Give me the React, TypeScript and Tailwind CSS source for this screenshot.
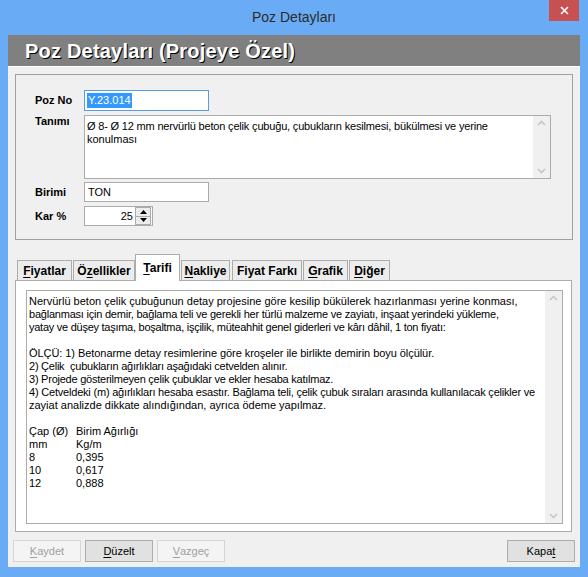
import React from "react";

const UI = { fontFamily: '"Liberation Sans", Arial, sans-serif' };

// satır, harf aralığı (Tahoma genişliğine yaklaştırmak için)
const memoLines: [string, string][] = [
  ["Nervürlü beton çelik çubuğunun detay projesine göre kesilip bükülerek hazırlanması yerine konması,", "tracking-[0px]"],
  ["bağlanması için demir, bağlama teli ve gerekli her türlü malzeme ve zayiatı, inşaat yerindeki yükleme,", "tracking-[-0.22px]"],
  ["yatay ve düşey taşıma, boşaltma, işçilik, müteahhit genel giderleri ve kârı dâhil, 1 ton fiyatı:", "tracking-[-0.26px]"],
  ["", ""],
  ["ÖLÇÜ: 1) Betonarme detay resimlerine göre kroşeler ile birlikte demirin boyu ölçülür.", "tracking-[-0.06px]"],
  ["2) Çelik  çubukların ağırlıkları aşağıdaki cetvelden alınır.", "tracking-[-0.24px]"],
  ["3) Projede gösterilmeyen çelik çubuklar ve ekler hesaba katılmaz.", "tracking-[-0.24px]"],
  ["4) Cetveldeki (m) ağırlıkları hesaba esastır. Bağlama teli, çelik çubuk sıraları arasında kullanılacak çelikler ve", "tracking-[-0.2px]"],
  ["zayiat analizde dikkate alındığından, ayrıca ödeme yapılmaz.", "tracking-[0px]"],
  ["", ""],
];

const tablo = [
  ["Çap (Ø)", "Birim Ağırlığı"],
  ["mm", "Kg/m"],
  ["8", "0,395"],
  ["10", "0,617"],
  ["12", "0,888"],
];

const sekmeler = [
  { ad: "Fiyatlar", alt: 0, w: "w-[55px]", ml: "ml-[2px]" },
  { ad: "Özellikler", alt: 1, w: "w-[62px]", ml: "ml-[1px]" },
  { ad: "Tarifi", alt: 0, w: "w-[45px]", ml: "ml-0", aktif: true },
  { ad: "Nakliye", alt: 0, w: "w-[49px]", ml: "ml-[1px]" },
  { ad: "Fiyat Farkı", alt: -1, w: "w-[70px]", ml: "ml-[2px]" },
  { ad: "Grafik", alt: 0, w: "w-[45px]", ml: "ml-[1px]" },
  { ad: "Diğer", alt: 0, w: "w-[41px]", ml: "ml-[1px]" },
];

function Kisayol({ metin, alt }: { metin: string; alt: number }) {
  if (alt < 0) return <>{metin}</>;
  return (
    <>
      {metin.slice(0, alt)}
      <span className="underline underline-offset-2">{metin[alt]}</span>
      {metin.slice(alt + 1)}
    </>
  );
}

function ScrollBar() {
  return (
    <div className="w-[17px] bg-[#f0f0f0] flex flex-col justify-between items-center py-[4px]">
      <svg width="9" height="6" viewBox="0 0 9 6">
        <path d="M1 5 L4.5 1.5 L8 5" stroke="#c2c2c2" strokeWidth="1.4" fill="none" />
      </svg>
      <svg width="9" height="6" viewBox="0 0 9 6">
        <path d="M1 1 L4.5 4.5 L8 1" stroke="#c2c2c2" strokeWidth="1.4" fill="none" />
      </svg>
    </div>
  );
}

function Dugme({ metin, alt, pasif }: { metin: string; alt: number; pasif?: boolean }) {
  return (
    <button
      className={`w-[68px] h-[22px] border text-[11px] flex items-center justify-center ${
        pasif ? "bg-[#f4f4f4] border-[#d5d5d5] text-[#a0a0a0]" : "bg-[#e1e1e1] border-[#adadad] text-black"
      }`}
      style={UI}
    >
      <Kisayol metin={metin} alt={alt} />
    </button>
  );
}

export default function App() {
  return (
    <div className="w-[588px] h-[577px] bg-[#6aabf5] flex flex-col overflow-hidden" style={UI}>
      {/* Başlık çubuğu */}
      <div className="h-[35px] relative shrink-0">
        <div className="h-[34px] flex items-center justify-center text-[14px] text-[#2b2b2b]">Poz Detayları</div>
        <div className="absolute right-[9px] top-0 w-[30px] h-[21px] bg-[#c75050] flex items-center justify-center">
          <svg width="9" height="9" viewBox="0 0 9 9">
            <path d="M1 1 L8 8 M8 1 L1 8" stroke="#fff" strokeWidth="1.6" />
          </svg>
        </div>
      </div>

      <div className="mx-[8px] flex-1 flex flex-col bg-[#f0f0f0]">
        {/* Başlık bandı */}
        <div className="h-[32px] bg-[#808080] border-b border-white flex items-center pl-[17px] shrink-0">
          <span className="text-[20px] font-bold text-white tracking-[0.2px] [text-shadow:1px_1px_0_#000]">Poz Detayları (Projeye Özel)</span>
        </div>

        {/* Genel bilgiler */}
        <div className="mx-[7px] mt-[7px] h-[166px] border border-[#a0a0a0] pt-[15px] pl-[19px] flex flex-col text-[11px]">
          <div className="flex items-center h-[21px]">
            <span className="w-[49px] font-bold">Poz No</span>
            <div className="w-[125px] h-[21px] border border-[#569de5] bg-white flex items-center pl-[2px]">
              <span className="bg-[#3399ff] text-white px-[1px] leading-[15px]">Y.23.014</span>
            </div>
          </div>
          <div className="flex mt-[4px] h-[64px]">
            <span className="w-[49px] font-bold leading-[13px]">Tanımı</span>
            <div className="w-[467px] h-[64px] border border-[#ababab] bg-white flex">
              <div className="flex-1 pl-[2px] pt-[4px] leading-[12.5px]">
                <span className="tracking-[-0.18px]">Ø 8- Ø 12 mm nervürlü beton çelik çubuğu, çubukların kesilmesi, bükülmesi ve yerine</span>
                <br />
                konulması
              </div>
              <ScrollBar />
            </div>
          </div>
          <div className="flex items-center mt-[3px] h-[20px]">
            <span className="w-[49px] font-bold">Birimi</span>
            <div className="w-[125px] h-[20px] border border-[#ababab] bg-white flex items-center pl-[3px]">TON</div>
          </div>
          <div className="flex items-center mt-[4px] h-[20px]">
            <span className="w-[49px] font-bold">Kar %</span>
            <div className="w-[69px] h-[20px] border border-[#ababab] bg-white flex items-center">
              <span className="flex-1 text-right pr-[2px]">25</span>
              <div className="w-[16px] h-[18px] flex flex-col mr-[1px]">
                <div className="flex-1 border border-[#acacac] bg-[#ececec] flex items-center justify-center">
                  <svg width="7" height="4" viewBox="0 0 7 4"><path d="M0 4 L3.5 0 L7 4Z" fill="#000" /></svg>
                </div>
                <div className="flex-1 border border-t-0 border-[#acacac] bg-[#ececec] flex items-center justify-center">
                  <svg width="7" height="4" viewBox="0 0 7 4"><path d="M0 0 L3.5 4 L7 0Z" fill="#000" /></svg>
                </div>
              </div>
            </div>
          </div>
        </div>

        {/* Sekmeler */}
        <div className="mx-[7px] mt-[14px] flex flex-col text-[12px]">
          <div className="flex items-end h-[26px] relative z-10">
            {sekmeler.map((s) =>
              s.aktif ? (
                <div
                  key={s.ad}
                  className={`${s.w} ${s.ml} h-[27px] -mb-[1px] border border-b-0 border-[#acacac] bg-white pt-[4px] text-center font-bold`}
                >
                  <Kisayol metin={s.ad} alt={s.alt} />
                </div>
              ) : (
                <div
                  key={s.ad}
                  className={`${s.w} ${s.ml} h-[20px] border border-b-0 border-[#acacac] bg-[#ececec] flex items-center justify-center font-bold`}
                >
                  <Kisayol metin={s.ad} alt={s.alt} />
                </div>
              )
            )}
          </div>
          <div className="w-[557px] h-[252px] border border-[#acacac] bg-white pl-[10px] pt-[9px] text-[11px]">
            <div className="w-[537px] h-[234px] border border-[#ababab] flex">
              <div className="flex-1 pl-[2px] pt-[4px] leading-[13px] whitespace-pre">
                {memoLines.map(([l, t], i) => (
                  <div key={i} className={`h-[13px] ${t}`}>{l}</div>
                ))}
                {tablo.map((r, i) => (
                  <div key={"t" + i} className="h-[13px] flex">
                    <span className="w-[47px]">{r[0]}</span>
                    <span>{r[1]}</span>
                  </div>
                ))}
              </div>
              <ScrollBar />
            </div>
          </div>
        </div>

        {/* Butonlar */}
        <div className="mt-[8px] mx-[5px] flex gap-[4px]">
          <Dugme metin="Kaydet" alt={0} pasif />
          <Dugme metin="Düzelt" alt={0} />
          <Dugme metin="Vazgeç" alt={0} pasif />
          <div className="flex-1" />
          <Dugme metin="Kapat" alt={4} />
        </div>
      </div>
      <div className="h-[10px] shrink-0" />
    </div>
  );
}
